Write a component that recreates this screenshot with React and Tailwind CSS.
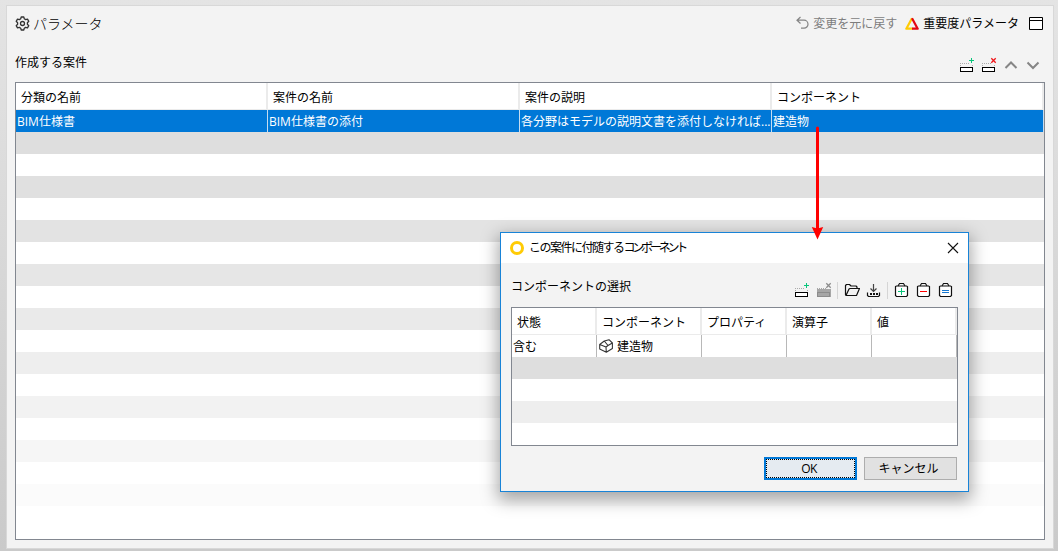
const COLUMNS = ["分類の名前", "案件の名前", "案件の説明", "コンポーネント"]
const SELECTED = ["BIM仕様書", "BIM仕様書の添付", "各分野はモデルの説明文書を添付しなければ...", "建造物"]
const STRIPES = [
  "bg-[#dedede]", "bg-[#e0e0e0]", "bg-[#e3e3e3]", "bg-[#e6e6e6]", "bg-[#eaeaea]",
  "bg-[#eeeeee]", "bg-[#f2f2f2]", "bg-[#f6f6f6]", "bg-[#fbfbfb]",
]
const DIALOG_COLUMNS = ["状態", "コンポーネント", "プロパティ", "演算子", "値"]

function GearIcon() {
  return (
    <svg width="15" height="15" viewBox="0 0 15 15" fill="none" stroke="#333" strokeWidth="1.3" strokeLinejoin="round">
      <path d="M6.2 1h2.6l.5 1.8 1.3.8 1.9-.5 1.3 2.2L12.4 6.7v1.6l1.4 1.4-1.3 2.2-1.9-.5-1.3.8-.5 1.8H6.2l-.5-1.8-1.3-.8-1.9.5-1.3-2.2L2.6 8.3V6.7L1.2 5.3l1.3-2.2 1.9.5 1.3-.8z" />
      <circle cx="7.5" cy="7.5" r="2" />
    </svg>
  )
}

function RowIcon({ remove, disabled }) {
  const edge = disabled ? "#8c8c8c" : "#000"
  return (
    <svg width="16" height="16" viewBox="0 0 16 16" fill="none">
      {disabled && <path d="M1 7h14v8H1z" fill="#a6a6a6" />}
      <path d="M1 6.5h9M1.5 8v2M13.5 8v2" stroke={disabled ? "#a6a6a6" : "#aaa"} strokeDasharray="1 1" />
      <rect x="1.5" y="10.5" width="12" height="4" stroke={edge} fill={disabled ? "#a6a6a6" : "#fff"} />
      {remove ? (
        <path d="M10.3 1.3l4.4 4.4M14.7 1.3l-4.4 4.4" stroke={disabled ? "#8c8c8c" : "#f01418"} strokeWidth="1.3" />
      ) : (
        <path d="M12.5 1v5M10 3.5h5" stroke="#08c47a" />
      )}
    </svg>
  )
}

function Chevron({ down }) {
  return (
    <svg width="16" height="16" viewBox="0 0 16 16" fill="none" stroke="#858585" strokeWidth="2">
      <path d={down ? "M2.5 5.5L8 11L13.5 5.5" : "M2.5 11L8 5.5L13.5 11"} />
    </svg>
  )
}

function UndoIcon() {
  return (
    <svg width="14" height="14" viewBox="0 0 14 14" fill="none" stroke="#858585" strokeWidth="1.2">
      <path d="M4.5 1L1 4.2L4.5 7.5M1 4.2h7a4 4 0 0 1 0 8H5" />
    </svg>
  )
}

function SeverityIcon() {
  return (
    <svg width="14" height="13" viewBox="0 0 14 13" fill="none" strokeWidth="2.2" strokeLinejoin="round">
      <path d="M7 1.2L1.3 11.7H7.5" stroke="#ffcb05" />
      <path d="M7 1.2L12.7 11.7H7" stroke="#e30613" />
    </svg>
  )
}

function WindowIcon() {
  return (
    <svg width="14" height="13" viewBox="0 0 14 13" fill="#fff" stroke="#000">
      <path d="M.5.5h13v12H.5zM.5 3.5h13" />
    </svg>
  )
}

function FolderIcon() {
  return (
    <svg width="16" height="16" viewBox="0 0 16 16" fill="none" stroke="#111" strokeWidth="1.2" strokeLinejoin="round">
      <path d="M2 13.5L1.5 12.5V3.5L2.5 2.5h3L7 4h5l1 1v1.5M2 13.5L5 7l1-.5h9.5l-3 7z" />
    </svg>
  )
}

function ImportIcon() {
  return (
    <svg width="16" height="16" viewBox="0 0 16 16" fill="none" stroke="#111" strokeWidth="1.2">
      <path d="M7.5 2v7.5M4.5 6.5l3 3 3-3" stroke="#444" />
      <path d="M1.5 10.5v3l1 1h10l1-1v-3" />
      <path d="M4 12h8" strokeWidth="2" strokeDasharray="2 1" />
    </svg>
  )
}

function BagIcon({ sign, color }) {
  return (
    <svg width="16" height="16" viewBox="0 0 16 16" fill="none">
      <path d="M1.5 4.5l1-.5h10l1 .5v9l-1 1h-10l-1-1z" fill="#fff" stroke="#111" strokeWidth="1.2" />
      <path d="M4 4l1.500-2.500h4L11 4" stroke="#111" strokeWidth="1.1" />
      <path d={sign} stroke={color} />
    </svg>
  )
}

function BoxIcon() {
  return (
    <svg width="14" height="14" viewBox="0 0 14 14" fill="none" stroke="#333" strokeWidth="1.1" strokeLinejoin="round">
      <path d="M.7 5.5L5.3 2L10 .7L13.4 4V9.5L7.300 13.300L.7 10zM.7 5.500L7 8L7.300 13.300M5.300 2L9 6.500L13.400 4M7 8L9 6.500" />
    </svg>
  )
}

function HeaderCell({ children }) {
  return (
    <div className="flex h-full items-center border-r-2 border-[#ebebeb] pl-[5px] pt-[4px]">
      {children}
    </div>
  )
}

function ComponentDialog() {
  return (
    <div className="absolute left-[500px] top-[232px] flex h-[260px] w-[469px] flex-col border border-[#1883d7] bg-[#f3f3f3] shadow-[0_6px_16px_2px_rgba(0,0,0,0.35)]">
      <div className="flex h-[30px] shrink-0 items-center bg-white px-[9px]">
        <span className="size-[14px] rounded-full border-[3px] border-[#ffcb05]" />
        <span className="ml-[5px] flex-1">
          <span className="tracking-[-1.5px]">この案件に付随する</span>
          <span className="tracking-[-3.2px]">コンポーネント</span>
        </span>
        <svg width="12" height="12" viewBox="0 0 12 12" stroke="#111" strokeWidth="1.1">
          <path d="M1 1l10 10M11 1L1 11" />
        </svg>
      </div>

      <div className="flex h-[44px] shrink-0 items-center pl-[10px] pr-[14px]">
        <span className="flex-1 pt-[3px]">コンポーネントの選択</span>
        <div className="flex items-center gap-1.5 pt-[10px]">
          <RowIcon />
          <RowIcon remove disabled />
          <span className="-ml-px h-[17px] w-px bg-[#d5d5d5]" />
          <FolderIcon />
          <ImportIcon />
          <span className="-ml-px h-[17px] w-px bg-[#d5d5d5]" />
          <BagIcon sign="M7.5 6v7M4 9.5h7" color="#08c47a" />
          <BagIcon sign="M4 9.5h7" color="#ff0000" />
          <BagIcon sign="M4 8.5h7M4 10.5h7" color="#1878d0" />
        </div>
      </div>

      <div className="mx-[10px] h-[139px] w-[447px] shrink-0 border border-[#828790] bg-white">
        <div className="grid h-[27px] grid-cols-[85px_105px_85px_85px_85px] border-b border-[#ebebeb]">
          {DIALOG_COLUMNS.map((name) => <HeaderCell key={name}>{name}</HeaderCell>)}
        </div>
        <div className="grid h-[22px] grid-cols-[85px_105px_85px_85px_85px] *:border-r *:border-[#b8b8b8]">
          <div className="flex items-center pl-px pt-[2px]">含む</div>
          <div className="flex items-center gap-[4px] pl-[2px]">
            <BoxIcon />
            <span className="pt-[2px]">建造物</span>
          </div>
          <div />
          <div />
          <div />
        </div>
        <div className="h-[22px] bg-[#dedede]" />
        <div className="mt-[22px] h-[22px] bg-[#eeeeee]" />
      </div>

      <div className="flex gap-[7px] pl-[263px] pt-[11px]">
        <button className="h-[23px] w-[93px] border border-[#0078d7] bg-[#e5ebf1] p-px ring-1 ring-inset ring-[#0078d7]">
          <span className="flex h-full w-full items-center justify-center border border-dotted border-black pr-[3px] tracking-[-0.5px]">OK</span>
        </button>
        <button className="h-[23px] w-[93px] border border-[#adadad] bg-[#e1e1e1] pr-[4px] pt-px">キャンセル</button>
      </div>
    </div>
  )
}

export default function App() {
  return (
    <div className="relative h-[551px] w-[1058px] overflow-hidden whitespace-nowrap bg-linear-to-b from-[#e4e4e4] to-[#cacaca] pl-[6px] pt-[5px] font-['Open_Sans','Noto_Sans_CJK_JP',sans-serif] text-[12px] leading-[16px] text-black">
      <div className="h-[544px] w-[1048px] border border-[#d8d8d8] bg-[#f3f3f3] px-[8px]">
        <div className="flex h-[34px] items-center">
          <GearIcon />
          <span className="ml-[3px] flex-1 pt-px text-[14px] font-light">パラメータ</span>
          <UndoIcon />
          <span className="ml-[3px] pt-[2px] text-[#7d7d7d]">変更を元に戻す</span>
          <span className="ml-[8px] pt-px"><SeverityIcon /></span>
          <span className="ml-[4px] mr-[10px] pt-[2px]">重要度パラメータ</span>
          <span className="mr-[2px] pt-px"><WindowIcon /></span>
        </div>

        <div className="flex h-[42px] items-center">
          <span className="flex-1 pt-[3px]">作成する案件</span>
          <div className="flex gap-1.5 pr-[4px] pt-[8px]">
            <RowIcon />
            <RowIcon remove />
            <Chevron />
            <Chevron down />
          </div>
        </div>

        <div className="h-[458px] w-[1030px] border border-[#828790] bg-white">
          <div className="grid h-[27px] grid-cols-[252px_252px_252px_272px] border-b border-[#ebebeb]">
            {COLUMNS.map((name) => <HeaderCell key={name}>{name}</HeaderCell>)}
          </div>
          <div className="grid h-[22px] grid-cols-[252px_252px_252px_272px] text-white">
            {SELECTED.map((text) => (
              <div key={text} className="flex items-center overflow-hidden border-r border-[#c5dcf0] bg-[#0078d7] pl-px pt-[2px]">
                {text}
              </div>
            ))}
          </div>
          <div className="flex flex-col gap-[22px]">
            {STRIPES.map((color) => <div key={color} className={`h-[22px] ${color}`} />)}
          </div>
        </div>
      </div>

      <ComponentDialog />

      {/* arrow from the selected cell to the dialog */}
      <svg className="absolute left-[810px] top-[126px]" width="15" height="115" viewBox="0 0 15 115">
        <path d="M7.5 2v104" stroke="#f00" strokeWidth="3" strokeLinecap="round" />
        <path d="M1.8 101l5.7 1.5 5.7-1.5L7.5 113.5z" fill="#f00" />
      </svg>
    </div>
  )
}
